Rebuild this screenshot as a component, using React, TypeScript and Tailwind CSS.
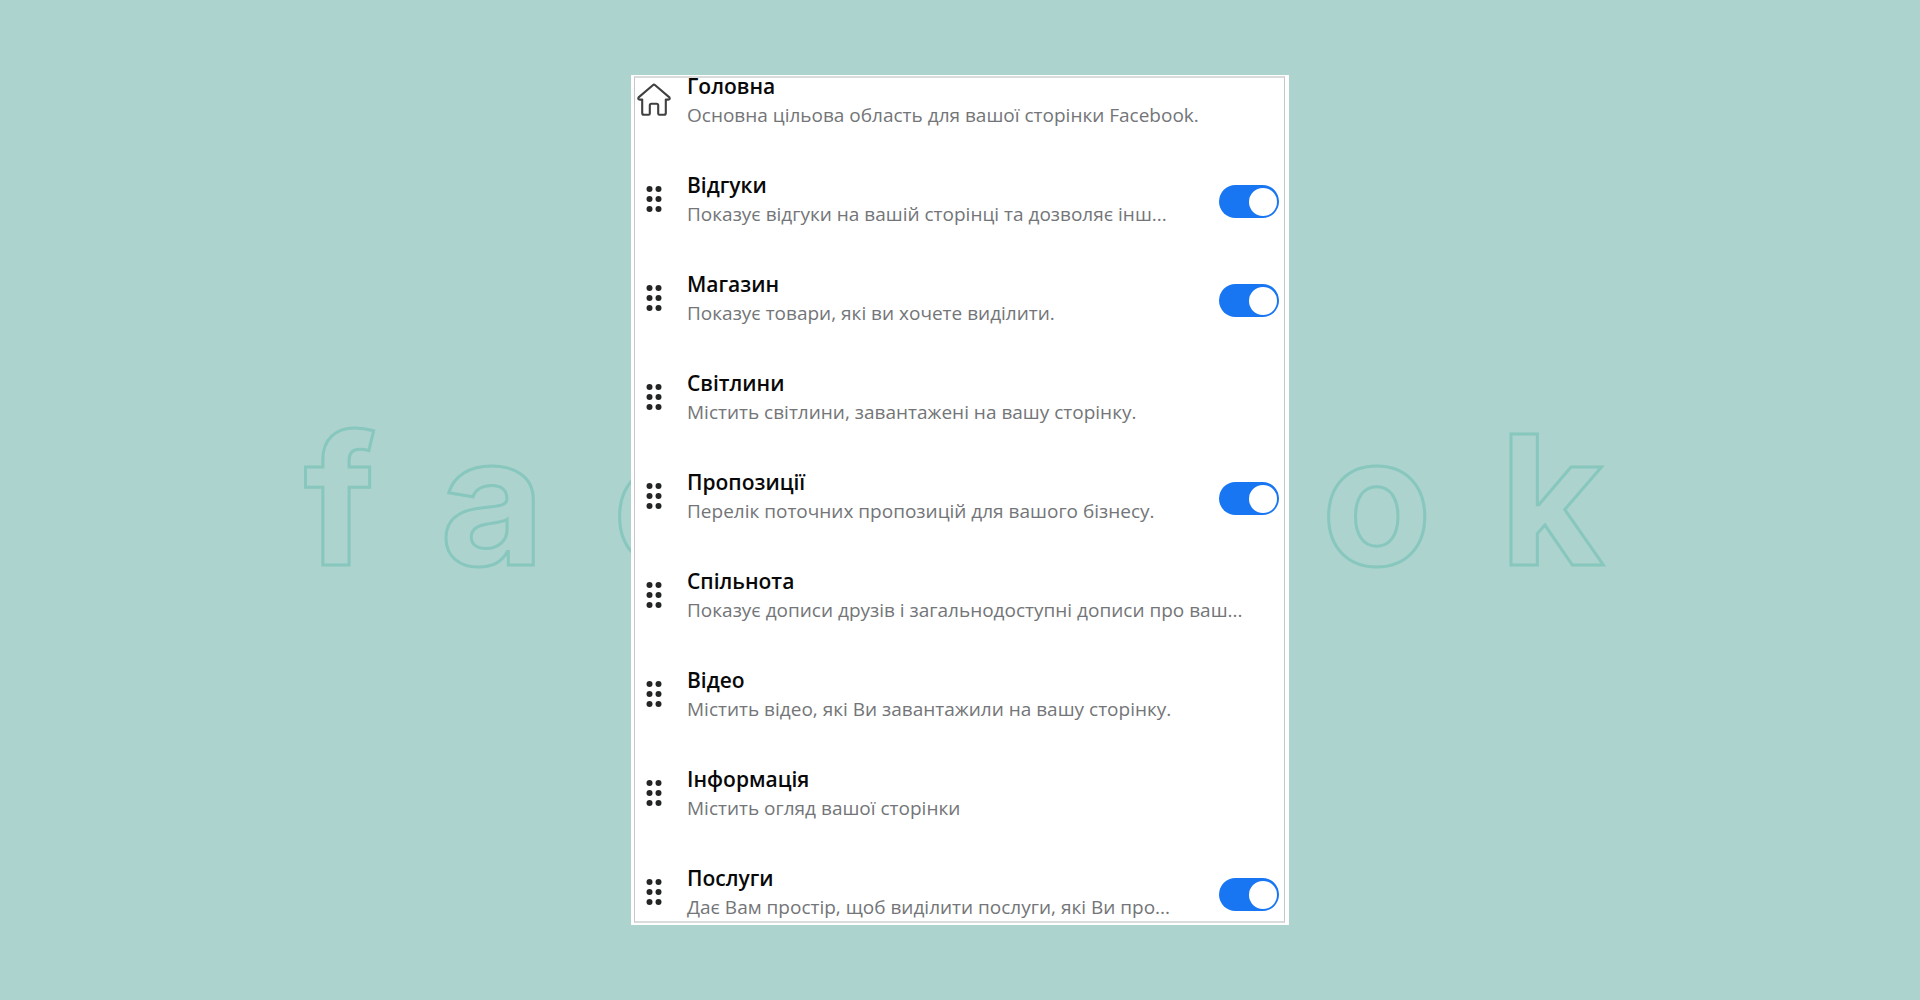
type Section = {
  id: string;
  title: string;
  description: string;
  toggle?: boolean;
  home?: boolean;
};

const sections: Section[] = [
  { id: "home", title: "Головна", description: "Основна цільова область для вашої сторінки Facebook.", home: true },
  { id: "reviews", title: "Відгуки", description: "Показує відгуки на вашій сторінці та дозволяє інш...", toggle: true },
  { id: "shop", title: "Магазин", description: "Показує товари, які ви хочете виділити.", toggle: true },
  { id: "photos", title: "Світлини", description: "Містить світлини, завантажені на вашу сторінку." },
  { id: "offers", title: "Пропозиції", description: "Перелік поточних пропозицій для вашого бізнесу.", toggle: true },
  { id: "community", title: "Спільнота", description: "Показує дописи друзів і загальнодоступні дописи про ваш..." },
  { id: "video", title: "Відео", description: "Містить відео, які Ви завантажили на вашу сторінку." },
  { id: "about", title: "Інформація", description: "Містить огляд вашої сторінки" },
  { id: "services", title: "Послуги", description: "Дає Вам простір, щоб виділити послуги, які Ви про...", toggle: true },
];

function HomeIcon() {
  return (
    <svg viewBox="0 0 34 34" className="mt-3 size-[34px]" fill="none" stroke="#3f4042" strokeWidth="2.1" strokeLinejoin="round" strokeLinecap="round" aria-hidden="true">
      <path d="M15.8 2.2Q17 1.2 18.2 2.2L32.4 14.4Q33.4 16.6 31.2 16.6H28.8V30Q28.8 31.8 27 31.8H22.4Q21.2 31.8 21.2 30.4V22.4Q21.2 20.8 19.6 20.8H14.4Q12.8 20.8 12.8 22.4V30.4Q12.8 31.8 11.6 31.8H7Q5.2 31.8 5.2 30V16.6H2.8Q0.6 16.6 1.6 14.4Z" />
    </svg>
  );
}

function DragHandle({ label }: { label: string }) {
  return (
    <button type="button" aria-label={label} className="mt-[15px] cursor-grab">
      <svg viewBox="0 0 16 28" className="h-7 w-4" fill="#242526" aria-hidden="true">
        {[4, 14, 24].map((y) => (
          <g key={y}>
            <circle cx="3.5" cy={y} r="3" />
            <circle cx="12.5" cy={y} r="3" />
          </g>
        ))}
      </svg>
    </button>
  );
}

function Toggle({ labelledBy }: { labelledBy: string }) {
  return (
    <input
      type="checkbox"
      role="switch"
      defaultChecked
      aria-labelledby={labelledBy}
      className="mt-[15px] mr-[5px] flex h-[33px] w-[60px] shrink-0 cursor-pointer appearance-none items-center rounded-full bg-gray-300 px-0.5 before:size-7 before:rounded-full before:bg-white checked:justify-end checked:bg-[#1876f2]"
    />
  );
}

export default function App() {
  return (
    <main className="relative flex min-h-screen items-center justify-center overflow-hidden bg-[#acd3ce] font-['Open_Sans',sans-serif]">
      <div aria-hidden="true" className="absolute inset-0 flex items-center justify-center pl-[56px] font-['Inter',sans-serif] text-[180px] leading-none font-bold tracking-[68px] whitespace-nowrap text-[#acd3ce] [-webkit-text-stroke:3px_#88c7bd]">
        facebook
      </div>
      <section className="relative w-full max-w-[658px] bg-white pt-px pr-1 pb-0.5 pl-[3px]">
        <div className="border border-[#c4c6c8] border-y-2 border-y-[#dadcdc]">
          <ul className="-mt-[7px] flex flex-col gap-[41px]">
            {sections.map((s) => (
              <li key={s.id} className="flex h-[58px] items-start">
                <div className="flex w-[52px] shrink-0 pl-0.5">
                  <div className="flex w-[34px] justify-center">
                    {s.home ? <HomeIcon /> : <DragHandle label={"Перемістити: " + s.title} />}
                  </div>
                </div>
                <div className="min-w-0 flex-1 whitespace-nowrap">
                  <h2 id={s.id} className="text-[21px] leading-[30px] font-semibold text-[#080809]">{s.title}</h2>
                  <p className="text-[19px] leading-7 text-[#737578]">{s.description}</p>
                </div>
                {s.toggle && <Toggle labelledBy={s.id} />}
              </li>
            ))}
          </ul>
        </div>
      </section>
    </main>
  );
}
